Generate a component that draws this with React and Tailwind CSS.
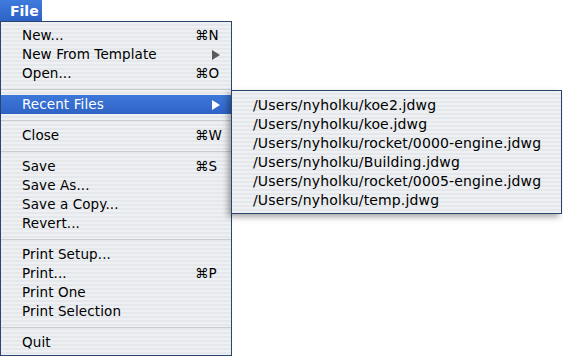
import React from "react";

const stripes =
  "bg-[repeating-linear-gradient(to_bottom,#eef0f3_0px,#eef0f3_2px,#e5e8eb_2px,#e5e8eb_4px)]";

function Arrow({ white }) {
  return (
    <svg width="8" height="10" viewBox="0 0 8 10" className="block">
      <polygon points="0,0 8,5 0,10" fill={white ? "#ffffff" : "#5a5a5a"} />
    </svg>
  );
}

function Row({ label, shortcut, arrow, active }) {
  return (
    <div
      className={
        "flex h-[19px] items-center pl-[21px] " +
        (active
          ? "bg-[linear-gradient(to_bottom,#3d78d8,#2f63c6)] text-white"
          : "text-black")
      }
    >
      <span className="flex-1 whitespace-nowrap tracking-[0.1px]">{label}</span>
      <span className="flex w-[36px] items-center">
        {shortcut && <span className="whitespace-nowrap">{shortcut}</span>}
        {arrow && (
          <span className="ml-[17px]">
            <Arrow white={active} />
          </span>
        )}
      </span>
    </div>
  );
}

function Sep() {
  return (
    <div className="flex h-[12px] items-center">
      <div className="h-px w-full bg-[#c9ccd0]" />
    </div>
  );
}

export default function App() {
  const files = [
    "/Users/nyholku/koe2.jdwg",
    "/Users/nyholku/koe.jdwg",
    "/Users/nyholku/rocket/0000-engine.jdwg",
    "/Users/nyholku/Building.jdwg",
    "/Users/nyholku/rocket/0005-engine.jdwg",
    "/Users/nyholku/temp.jdwg",
  ];
  return (
    <div
      className="relative h-[357px] w-[563px] overflow-hidden bg-white text-[13.5px] leading-none"
      style={{ fontFamily: '"DejaVu Sans", Verdana, sans-serif' }}
    >
      <div className="flex h-[21px] w-[42px] items-center bg-[linear-gradient(to_bottom,#3f7bdc,#2e62c6)] pl-[10px] text-[14px] font-bold text-white">
        File
      </div>
      <div
        className={
          "w-[232px] border border-[#2a4470] pb-[3px] pt-[4px] " + stripes
        }
      >
        <Row label="New..." shortcut="⌘N" />
        <Row label="New From Template" arrow />
        <Row label="Open..." shortcut="⌘O" />
        <Sep />
        <Row label="Recent Files" arrow active />
        <Sep />
        <Row label="Close" shortcut="⌘W" />
        <Sep />
        <Row label="Save" shortcut="⌘S" />
        <Row label="Save As..." />
        <Row label="Save a Copy..." />
        <Row label="Revert..." />
        <Sep />
        <Row label="Print Setup..." />
        <Row label="Print..." shortcut="⌘P" />
        <Row label="Print One" />
        <Row label="Print Selection" />
        <Sep />
        <Row label="Quit" />
      </div>
      <div
        className={
          "absolute left-[231px] top-[90px] w-[331px] border border-[#2a4470] py-[4px] shadow-[-3px_3px_6px_rgba(0,0,0,0.35)] " +
          stripes
        }
      >
        {files.map((f) => (
          <div
            key={f}
            className="flex h-[19px] items-center whitespace-nowrap pl-[21px] text-[14px] tracking-[0.15px] text-black"
          >
            {f}
          </div>
        ))}
      </div>
    </div>
  );
}
